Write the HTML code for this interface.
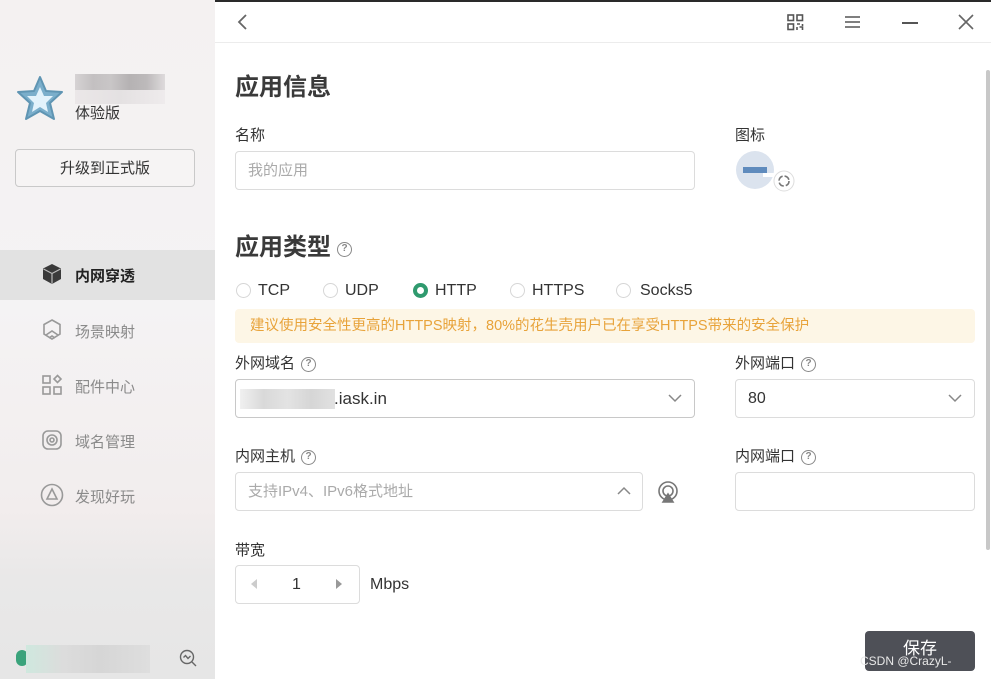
<!DOCTYPE html>
<html><head><meta charset="utf-8"><style>
*{margin:0;padding:0;box-sizing:border-box}
body{width:991px;height:679px;overflow:hidden;position:relative;background:#fff;font-family:"Liberation Sans","Noto Sans CJK SC",sans-serif;color:#333}
.a{position:absolute}
.side{left:0;top:0;width:215px;height:679px;background:linear-gradient(#f4f1f1 0,#f4f3f4 45%,#f2eded 75%,#e9e8e8 85%,#e6e6e6 100%)}
.lbl{font-size:15px;color:#333}
.inp{border:1px solid #dcdcdc;border-radius:4px;background:#fff}
.q{display:inline-block;width:15px;height:15px;border:1.5px solid #888;border-radius:50%;font-size:10px;line-height:12px;text-align:center;color:#888;font-weight:bold;vertical-align:2px;margin-left:6px}
.radio{width:15px;height:15px;border:1px solid #d6d6d6;border-radius:50%;background:#fff}
.rt{font-size:16px;color:#333}
.nav{font-size:15px;color:#8a8a8a;left:75px}
.blur{background:linear-gradient(90deg,#d6d3d4,#c3c0c1,#c9c6c7,#b5b2b3,#bdbabb,#dedbdc)}
</style></head><body>
<div class="a" style="left:0;top:0;width:991px;height:2px;background:#2a2a2a"></div>
<div class="a side"></div>
<svg class="a" style="left:16px;top:75px" width="48" height="46" viewBox="0 0 48 46"><path d="M24 2 L30 16 L46 17 L34 28 L38 44 L24 36 L10 44 L14 28 L2 17 L18 16 Z" fill="#7aaecb" stroke="#5f95b3" stroke-width="2" stroke-linejoin="round"/><path d="M24 12 L28 21 L37 21 L30 28 L32 37 L24 32 L16 37 L18 28 L11 21 L20 21 Z" fill="#e2f2fb"/></svg>
<div class="a blur" style="left:75px;top:74px;width:90px;height:16px"></div>
<div class="a" style="left:75px;top:90px;width:90px;height:14px;background:linear-gradient(90deg,#ebe7e8,#e4e1e2,#eeebec)"></div>
<div class="a" style="left:75px;top:102px;font-size:15px;color:#333">体验版</div>
<div class="a" style="left:15px;top:149px;width:180px;height:38px;border:1px solid #c9c9c9;border-radius:4px;background:#f6f4f4;text-align:center;line-height:38px;font-size:15px;color:#333">升级到正式版</div>
<div class="a" style="left:0;top:250px;width:215px;height:50px;background:#e2e2e2"></div>
<svg class="a" style="left:41px;top:263px" width="22" height="22" viewBox="0 0 22 22"><path d="M11 1 L20 5.5 V16 L11 21 L2 16 V5.5 Z" fill="#3a3a3a"/><path d="M2.5 6 L11 10.5 L19.5 6 M11 10.5 V20.5" stroke="#bbb" stroke-width="1.2" fill="none"/></svg>
<div class="a" style="left:75px;top:265px;font-size:15px;font-weight:bold;color:#222">内网穿透</div>
<svg class="a" style="left:42px;top:319px" width="20" height="22" viewBox="0 0 20 22" fill="none" stroke="#999" stroke-width="1.6"><path d="M10 1 L18 5.5 V15 L10 20 L2 15 V5.5 Z"/><path d="M4 16 L10 12 L16 16 M7 19 L10 17 L13 19"/></svg>
<div class="a nav" style="top:321px">场景映射</div>
<svg class="a" style="left:41px;top:374px" width="22" height="22" viewBox="0 0 22 22" fill="none" stroke="#999" stroke-width="1.6"><rect x="2" y="2" width="7" height="7"/><rect x="2" y="13" width="7" height="7"/><rect x="13" y="13" width="7" height="7"/><path d="M16.5 1.5 L20 5 L16.5 8.5 L13 5 Z"/></svg>
<div class="a nav" style="top:376px">配件中心</div>
<svg class="a" style="left:41px;top:429px" width="22" height="22" viewBox="0 0 22 22" fill="none" stroke="#999" stroke-width="1.6"><rect x="2" y="2" width="18" height="18" rx="5"/><circle cx="11" cy="11" r="5"/><circle cx="11" cy="11" r="2"/></svg>
<div class="a nav" style="top:431px">域名管理</div>
<svg class="a" style="left:40px;top:483px" width="24" height="24" viewBox="0 0 24 24" fill="none" stroke="#999" stroke-width="1.6"><circle cx="12" cy="12" r="10.5"/><path d="M12 6 L17 16 H7 Z"/></svg>
<div class="a nav" style="top:486px">发现好玩</div>
<div class="a" style="left:16px;top:650px;width:12px;height:16px;border-radius:6px;background:#3aa37b"></div>
<div class="a" style="left:26px;top:645px;width:124px;height:28px;background:linear-gradient(90deg,#cfe8de,#dcdcdc 30%,#d6d6d6 60%,#dedede)"></div>
<svg class="a" style="left:178px;top:648px" width="20" height="20" viewBox="0 0 20 20" fill="none" stroke="#666" stroke-width="1.4"><circle cx="9" cy="9" r="6.5"/><path d="M14 14 L18 18 M5.5 9.5 L7.5 7.5 L10 10.5 L12.5 8"/></svg>

<div class="a" style="left:215px;top:42px;width:776px;height:1px;background:#ececec"></div>
<svg class="a" style="left:236px;top:13px" width="14" height="18" viewBox="0 0 14 18"><path d="M10 2 L3 9 L10 16" stroke="#666" stroke-width="1.8" fill="none"/></svg>
<svg class="a" style="left:787px;top:14px" width="17" height="17" viewBox="0 0 17 17" fill="none" stroke="#555" stroke-width="1.6"><rect x="1" y="1" width="5.5" height="5.5"/><rect x="10" y="1" width="5.5" height="5.5"/><rect x="1" y="10" width="5.5" height="5.5"/><path d="M10 10 H13 M15.5 10 V12 M10 13 V16 M12.5 13 H15.5 V16"/></svg>
<svg class="a" style="left:844px;top:15px" width="17" height="14" viewBox="0 0 17 14" stroke="#555" stroke-width="1.6"><path d="M1 2 H16 M1 7 H16 M1 12 H16"/></svg>
<div class="a" style="left:902px;top:22px;width:16px;height:1.6px;background:#555"></div>
<svg class="a" style="left:958px;top:14px" width="16" height="16" viewBox="0 0 16 16" stroke="#666" stroke-width="1.6"><path d="M1 1 L15 15 M15 1 L1 15"/></svg>
<div class="a" style="left:986px;top:70px;width:4px;height:480px;background:#c8c8c8;border-radius:2px"></div>

<div class="a" style="left:235px;top:67px;font-size:24px;font-weight:bold;color:#3a3a3a">应用信息</div>
<div class="a lbl" style="left:235px;top:124px">名称</div>
<div class="a inp" style="left:235px;top:151px;width:460px;height:39px;padding-left:12px;line-height:37px;font-size:15px;color:#aaa">我的应用</div>
<div class="a lbl" style="left:735px;top:124px">图标</div>
<svg class="a" style="left:735px;top:150px" width="62" height="42" viewBox="0 0 62 42"><circle cx="20" cy="20" r="19" fill="#dbe3ee"/><rect x="8" y="17" width="24" height="6" fill="#5f8bbd"/><rect x="28" y="23" width="20" height="4" fill="#fff"/><circle cx="49" cy="31" r="10" fill="#fff" stroke="#ddd"/><circle cx="49" cy="31" r="5" fill="none" stroke="#777" stroke-width="1.6" stroke-dasharray="6 2"/></svg>

<div class="a" style="left:235px;top:227px;font-size:24px;font-weight:bold;color:#3a3a3a">应用类型<span class="q" style="vertical-align:4px">?</span></div>
<div class="a radio" style="left:236px;top:283px"></div><div class="a rt" style="left:258px;top:282px">TCP</div>
<div class="a radio" style="left:323px;top:283px"></div><div class="a rt" style="left:345px;top:282px">UDP</div>
<div class="a" style="left:413px;top:283px;width:15px;height:15px;border-radius:50%;border:4px solid #2f9a6e;background:#fff"></div><div class="a rt" style="left:435px;top:282px">HTTP</div>
<div class="a radio" style="left:510px;top:283px"></div><div class="a rt" style="left:532px;top:282px">HTTPS</div>
<div class="a radio" style="left:616px;top:283px"></div><div class="a rt" style="left:640px;top:282px">Socks5</div>
<div class="a" style="left:235px;top:309px;width:740px;height:34px;background:#fdf6e6;border-radius:4px;padding-left:15px;line-height:34px;font-size:14.5px;color:#e8a33a">建议使用安全性更高的HTTPS映射，80%的花生壳用户已在享受HTTPS带来的安全保护</div>

<div class="a lbl" style="left:235px;top:352px">外网域名<span class="q">?</span></div>
<div class="a inp" style="left:235px;top:379px;width:460px;height:39px;border-color:#c8c8c8"></div>
<div class="a" style="left:240px;top:389px;width:95px;height:20px;background:linear-gradient(90deg,#f0f0f0,#d9d9d9,#e3e3e3,#d6d6d6,#e1e1e1)"></div>
<div class="a" style="left:334px;top:389px;font-size:17px;color:#333">.iask.in</div>
<svg class="a" style="left:668px;top:393px" width="14" height="10" viewBox="0 0 14 10"><path d="M1 2 L7 8 L13 2" stroke="#888" stroke-width="1.5" fill="none"/></svg>
<div class="a lbl" style="left:735px;top:352px">外网端口<span class="q">?</span></div>
<div class="a inp" style="left:735px;top:379px;width:240px;height:39px;padding-left:12px;line-height:38px;font-size:16px;color:#333">80</div>
<svg class="a" style="left:948px;top:393px" width="14" height="10" viewBox="0 0 14 10"><path d="M1 2 L7 8 L13 2" stroke="#888" stroke-width="1.5" fill="none"/></svg>

<div class="a lbl" style="left:235px;top:445px">内网主机<span class="q">?</span></div>
<div class="a inp" style="left:235px;top:472px;width:408px;height:39px;padding-left:12px;line-height:38px;font-size:15px;color:#aaa">支持IPv4、IPv6格式地址</div>
<svg class="a" style="left:617px;top:486px" width="14" height="10" viewBox="0 0 14 10"><path d="M1 8 L7 2 L13 8" stroke="#888" stroke-width="1.5" fill="none"/></svg>
<svg class="a" style="left:657px;top:481px" width="22" height="22" viewBox="0 0 22 22" fill="none" stroke="#777" stroke-width="1.6"><circle cx="11" cy="10" r="9"/><circle cx="11" cy="10" r="5"/><path d="M6 21 L11 13 L16 21 Z" fill="#777"/></svg>
<div class="a lbl" style="left:735px;top:445px">内网端口<span class="q">?</span></div>
<div class="a inp" style="left:735px;top:472px;width:240px;height:39px"></div>

<div class="a lbl" style="left:235px;top:539px">带宽</div>
<div class="a inp" style="left:235px;top:565px;width:125px;height:39px"></div>
<div class="a" style="left:251px;top:579px;width:0;height:0;border-top:5px solid transparent;border-bottom:5px solid transparent;border-right:6px solid #ccc"></div>
<div class="a" style="left:292px;top:576px;font-size:16px">1</div>
<div class="a" style="left:336px;top:579px;width:0;height:0;border-top:5px solid transparent;border-bottom:5px solid transparent;border-left:6px solid #999"></div>
<div class="a" style="left:370px;top:576px;font-size:16px;color:#333">Mbps</div>

<div class="a" style="left:865px;top:631px;width:110px;height:40px;background:#4e5057;border-radius:4px;color:#fff;text-align:center;font-size:17px;line-height:36px">保存</div>
<div class="a" style="left:860px;top:654px;font-size:12px;color:#e8e8e8">CSDN @CrazyL-</div>
</body></html>
